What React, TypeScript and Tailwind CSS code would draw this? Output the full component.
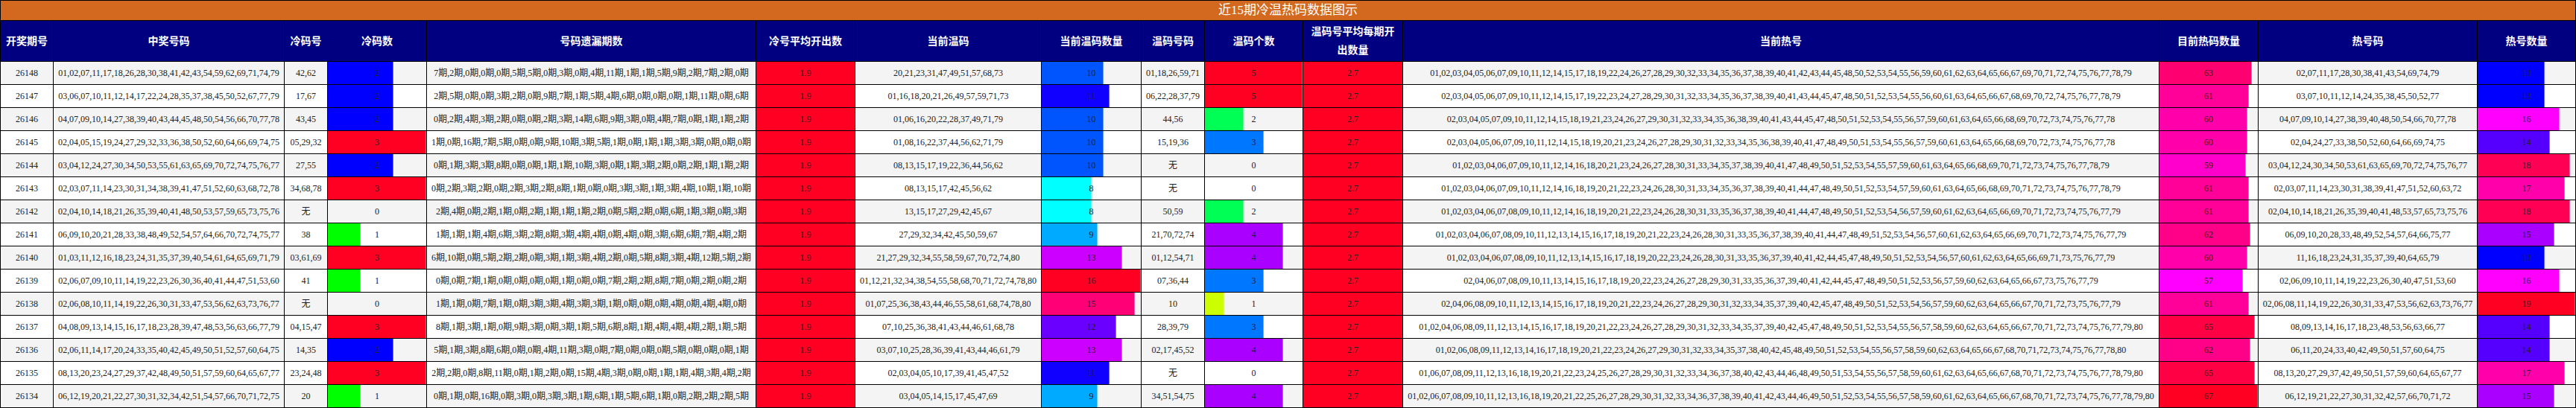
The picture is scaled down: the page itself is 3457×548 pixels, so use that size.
const COLS = [71, 310, 58, 133, 442, 133, 250, 134, 85, 132, 134, 1015, 133, 294, 132];

const HEADERS = ['开奖期号', '中奖号码', '冷码号', '冷码数', '号码遗漏期数', '冷号平均开出数', '当前温码', '当前温码数量', '温码号码', '温码个数', '温码号平均每期开出数量', '当前热号', '目前热码数量', '热号码', '热号数量'];

const RED = '#ff0022';

const COLD_COLOR: Record<number, string> = { 1: '#00ff00', 2: '#0000ff', 3: RED };
const WARM_NOW_COLOR: Record<number, string> = {
  8: '#00ffff', 9: '#00aaff', 10: '#0055ff', 11: '#1000ff', 12: '#6a00ff', 13: '#cc00ff', 15: '#ff0077', 16: RED
};
const WARM_COLOR: Record<number, string> = { 1: '#ccff00', 2: '#00ff55', 3: '#0077ff', 4: '#aa00ff', 5: RED };
const HOT_NOW_COLOR: Record<number, string> = {
  57: '#ff00ff', 59: '#ff00cc', 60: '#ff00aa', 61: '#ff0099', 62: '#ff0088', 63: '#ff0070', 65: '#ff0044', 67: RED
};
const HOT_COLOR: Record<number, string> = {
  13: '#0000ff', 14: '#5500ff', 15: '#aa00ff', 16: '#ff00ff', 17: '#ff00aa', 18: '#ff0055', 19: RED
};

// issue, winners, cold, miss, warm now, warm, hot now, hot
const ROWS: string[][] = [
  ['26148', '01,02,07,11,17,18,26,28,30,38,41,42,43,54,59,62,69,71,74,79', '42,62', '7,2,0,0,0,5,5,0,3,0,4,11,1,1,5,9,2,7,2,0', '20,21,23,31,47,49,51,57,68,73', '01,18,26,59,71', '01,02,03,04,05,06,07,09,10,11,12,14,15,17,18,19,22,24,26,27,28,29,30,32,33,34,35,36,37,38,39,40,41,42,43,44,45,48,50,52,53,54,55,56,59,60,61,62,63,64,65,66,67,69,70,71,72,74,75,76,77,78,79', '02,07,11,17,28,30,38,41,43,54,69,74,79'],
  ['26147', '03,06,07,10,11,12,14,17,22,24,28,35,37,38,45,50,52,67,77,79', '17,67', '2,5,0,0,3,2,0,9,7,1,5,4,6,0,0,0,1,11,0,6', '01,16,18,20,21,26,49,57,59,71,73', '06,22,28,37,79', '02,03,04,05,06,07,09,10,11,12,14,15,17,19,22,23,24,27,28,29,30,31,32,33,34,35,36,37,38,39,40,41,43,44,45,47,48,50,51,52,53,54,55,56,60,61,63,64,65,66,67,68,69,70,72,74,75,76,77,78,79', '03,07,10,11,12,14,24,35,38,45,50,52,77'],
  ['26146', '04,07,09,10,14,27,38,39,40,43,44,45,48,50,54,56,66,70,77,78', '43,45', '0,2,4,3,2,0,0,2,3,14,6,9,3,0,4,7,0,1,1,2', '01,06,16,20,22,28,37,49,71,79', '44,56', '02,03,04,05,07,09,10,11,12,14,15,18,19,21,23,24,26,27,29,30,31,32,33,34,35,36,38,39,40,41,43,44,45,47,48,50,51,52,53,54,55,56,57,59,60,61,63,64,65,66,68,69,70,72,73,74,75,76,77,78', '04,07,09,10,14,27,38,39,40,48,50,54,66,70,77,78'],
  ['26145', '02,04,05,15,19,24,27,29,32,33,36,38,50,52,60,64,66,69,74,75', '05,29,32', '1,0,16,7,5,0,0,9,10,3,5,1,0,1,1,3,3,0,0,0', '01,08,16,22,37,44,56,62,71,79', '15,19,36', '02,03,04,05,06,07,09,10,11,12,14,15,18,19,20,21,23,24,26,27,28,29,30,31,32,33,34,35,36,38,39,40,41,47,48,49,50,51,53,54,55,56,57,59,60,61,63,64,65,66,68,69,70,72,73,74,75,76,77,78', '02,04,24,27,33,38,50,52,60,64,66,69,74,75'],
  ['26144', '03,04,12,24,27,30,34,50,53,55,61,63,65,69,70,72,74,75,76,77', '27,55', '0,1,3,3,8,0,0,1,1,10,3,0,1,3,2,0,2,1,1,2', '08,13,15,17,19,22,36,44,56,62', '无', '01,02,03,04,06,07,09,10,11,12,14,16,18,20,21,23,24,26,27,28,30,31,33,34,35,37,38,39,40,41,47,48,49,50,51,52,53,54,55,57,59,60,61,63,64,65,66,68,69,70,71,72,73,74,75,76,77,78,79', '03,04,12,24,30,34,50,53,61,63,65,69,70,72,74,75,76,77'],
  ['26143', '02,03,07,11,14,23,30,31,34,38,39,41,47,51,52,60,63,68,72,78', '34,68,78', '0,2,3,2,0,2,3,2,8,1,0,0,3,3,1,3,4,10,1,10', '08,13,15,17,42,45,56,62', '无', '01,02,03,04,06,07,09,10,11,12,14,16,18,19,20,21,22,23,24,26,28,30,31,33,34,35,36,37,38,39,40,41,44,47,48,49,50,51,52,53,54,57,59,60,61,63,64,65,66,68,69,70,71,72,73,74,75,76,77,78,79', '02,03,07,11,14,23,30,31,38,39,41,47,51,52,60,63,72'],
  ['26142', '02,04,10,14,18,21,26,35,39,40,41,48,50,53,57,59,65,73,75,76', '无', '2,4,0,2,1,0,2,1,1,1,2,0,5,2,0,6,1,3,0,3', '13,15,17,27,29,42,45,67', '50,59', '01,02,03,04,06,07,08,09,10,11,12,14,16,18,19,20,21,22,23,24,26,28,30,31,33,35,36,37,38,39,40,41,44,47,48,49,50,51,52,53,54,56,57,59,60,61,62,63,64,65,66,69,70,71,72,73,74,75,76,77,79', '02,04,10,14,18,21,26,35,39,40,41,48,53,57,65,73,75,76'],
  ['26141', '06,09,10,20,21,28,33,38,48,49,52,54,57,64,66,70,72,74,75,77', '38', '1,1,1,4,6,3,2,8,3,4,4,0,4,0,3,6,6,7,4,2', '27,29,32,34,42,45,50,59,67', '21,70,72,74', '01,02,03,04,06,07,08,09,10,11,12,13,14,15,16,17,18,19,20,21,22,23,24,26,28,30,31,33,35,36,37,38,39,40,41,44,47,48,49,51,52,53,54,56,57,60,61,62,63,64,65,66,69,70,71,72,73,74,75,76,77,79', '06,09,10,20,28,33,48,49,52,54,57,64,66,75,77'],
  ['26140', '01,03,11,12,16,18,23,24,31,35,37,39,40,54,61,64,65,69,71,79', '03,61,69', '6,10,0,5,2,2,0,3,1,3,4,2,0,5,8,3,4,12,5,2', '21,27,29,32,34,55,58,59,67,70,72,74,80', '01,12,54,71', '01,02,03,04,06,07,08,09,10,11,12,13,14,15,16,17,18,19,20,22,23,24,26,28,30,31,33,35,36,37,39,40,41,42,44,45,47,48,49,50,51,52,53,54,56,57,60,61,62,63,64,65,66,69,71,73,75,76,77,79', '11,16,18,23,24,31,35,37,39,40,64,65,79'],
  ['26139', '02,06,07,09,10,11,14,19,22,23,26,30,36,40,41,44,47,51,53,60', '41', '0,0,7,1,0,0,0,0,1,0,0,7,2,2,8,7,0,2,0,2', '01,12,21,32,34,38,54,55,58,68,70,71,72,74,78,80', '07,36,44', '02,04,06,07,08,09,10,11,13,14,15,16,17,18,19,20,22,23,24,26,27,28,29,30,31,33,35,36,37,39,40,41,42,44,45,47,48,49,50,51,52,53,56,57,59,60,62,63,64,65,66,67,73,75,76,77,79', '02,06,09,10,11,14,19,22,23,26,30,40,47,51,53,60'],
  ['26138', '02,06,08,10,11,14,19,22,26,30,31,33,47,53,56,62,63,73,76,77', '无', '1,1,0,7,1,0,3,3,4,3,3,1,0,0,0,4,0,4,4,0', '01,07,25,36,38,43,44,46,55,58,61,68,74,78,80', '10', '02,04,06,08,09,10,11,12,13,14,15,16,17,18,19,20,21,22,23,24,26,27,28,29,30,31,32,33,34,35,37,39,40,42,45,47,48,49,50,51,52,53,54,56,57,59,60,62,63,64,65,66,67,70,71,72,73,75,76,77,79', '02,06,08,11,14,19,22,26,30,31,33,47,53,56,62,63,73,76,77'],
  ['26137', '04,08,09,13,14,15,16,17,18,23,28,39,47,48,53,56,63,66,77,79', '04,15,47', '8,1,3,1,0,9,3,0,3,1,5,6,8,1,4,4,4,2,1,5', '07,10,25,36,38,41,43,44,46,61,68,78', '28,39,79', '01,02,04,06,08,09,11,12,13,14,15,16,17,18,19,20,21,22,23,24,26,27,28,29,30,31,32,33,34,35,37,39,40,42,45,47,48,49,50,51,52,53,54,55,56,57,58,59,60,62,63,64,65,66,67,70,71,72,73,74,75,76,77,79,80', '08,09,13,14,16,17,18,23,48,53,56,63,66,77'],
  ['26136', '02,06,11,14,17,20,24,33,35,40,42,45,49,50,51,52,57,60,64,75', '14,35', '5,1,3,8,6,0,0,4,11,3,0,7,0,0,0,5,0,0,0,1', '03,07,10,25,28,36,39,41,43,44,46,61,79', '02,17,45,52', '01,02,06,08,09,11,12,13,14,16,17,18,19,20,21,22,23,24,26,27,29,30,31,32,33,34,35,37,38,40,42,45,48,49,50,51,52,53,54,55,56,57,58,59,60,62,63,64,65,66,67,68,70,71,72,73,74,75,76,77,78,80', '06,11,20,24,33,40,42,49,50,51,57,60,64,75'],
  ['26135', '08,13,20,23,24,27,29,37,42,48,49,50,51,57,59,60,64,65,67,77', '23,24,48', '2,2,0,8,11,0,1,2,0,15,4,3,0,0,1,1,4,3,4,2', '02,03,04,05,10,17,39,41,45,47,52', '无', '01,06,07,08,09,11,12,13,16,18,19,20,21,22,23,24,25,26,27,28,29,30,31,32,33,34,36,37,38,40,42,43,44,46,48,49,50,51,53,54,55,56,57,58,59,60,61,62,63,64,65,66,67,68,70,71,72,73,74,75,76,77,78,79,80', '08,13,20,27,29,37,42,49,50,51,57,59,60,64,65,67,77'],
  ['26134', '06,12,19,20,21,22,27,30,31,32,34,42,51,54,57,66,70,71,72,75', '20', '0,1,0,16,0,3,0,3,3,1,6,1,5,6,1,0,2,2,2,5', '03,04,05,14,15,17,45,47,69', '34,51,54,75', '01,02,06,07,08,09,10,11,12,13,16,18,19,20,21,22,25,26,27,28,29,30,31,32,33,34,36,37,38,39,40,41,42,43,44,46,49,50,51,52,53,54,55,56,57,58,59,60,61,62,63,64,65,66,67,68,70,71,72,73,74,75,76,77,78,79,80', '06,12,19,21,22,27,30,31,32,42,57,66,70,71,72'],
];

const countOf = (list: string) => (list === '无' ? 0 : list.split(',').length);

function Bar({ value, max, colors }: { value: number; max: number; colors: Record<number, string> }) {
  return (
    <td className="relative border border-black p-0 text-center">
      {value > 0 && (
        <div
          className="absolute inset-y-0 left-0 border-r border-white/40"
          style={{ width: `${(value / max) * 100}%`, backgroundColor: colors[value] }}
        />
      )}
      <span className="relative">{value}</span>
    </td>
  );
}

function Cell({ text }: { text: string }) {
  return <td className="border border-black p-0 text-center whitespace-nowrap">{text}</td>;
}

function Flat({ text }: { text: string }) {
  return <td className="border border-black bg-[#ff0022] p-0 text-center">{text}</td>;
}

export default function App() {
  return (
    <div className="w-[3456px] bg-white font-['Liberation_Serif','Noto_Sans_CJK_SC',serif] text-xs text-[#222]">
      <table className="w-full table-fixed border-collapse">
        <colgroup>
          {COLS.map((w, i) => (
            <col key={i} style={{ width: w }} />
          ))}
        </colgroup>
        <thead>
          <tr className="h-[27px] bg-[#d2691e]">
            <th colSpan={15} className="border border-black p-0 text-center text-[17px] font-normal text-white">
              近15期冷温热码数据图示
            </th>
          </tr>
          <tr className="h-[55px] bg-[#000080]">
            {HEADERS.map((h, i) => (
              <th
                key={h}
                className={`border border-black py-0 text-center text-sm leading-[25px] font-bold text-white ${i === 10 ? 'px-2' : 'px-0 whitespace-nowrap'} ${i === 2 ? 'border-r-[#000080]' : ''}`}
              >
                {h}
              </th>
            ))}
          </tr>
        </thead>
        <tbody>
          {ROWS.map((r, i) => {
            const cold = countOf(r[2]);
            const warmNow = countOf(r[4]);
            const warm = countOf(r[5]);
            const hotNow = countOf(r[6]);
            const hot = countOf(r[7]);
            const miss = r[3].split(',').map(n => `${n}期`).join(',');
            return (
              <tr key={r[0]} className={`h-[31px] ${i % 2 === 0 ? 'bg-[#f4f4f4]' : 'bg-white'}`}>
                <Cell text={r[0]} />
                <Cell text={r[1]} />
                <Cell text={r[2]} />
                <Bar value={cold} max={3} colors={COLD_COLOR} />
                <Cell text={miss} />
                <Flat text="1.9" />
                <Cell text={r[4]} />
                <Bar value={warmNow} max={16} colors={WARM_NOW_COLOR} />
                <Cell text={r[5]} />
                <Bar value={warm} max={5} colors={WARM_COLOR} />
                <Flat text="2.7" />
                <Cell text={r[6]} />
                <Bar value={hotNow} max={67} colors={HOT_NOW_COLOR} />
                <Cell text={r[7]} />
                <Bar value={hot} max={19} colors={HOT_COLOR} />
              </tr>
            );
          })}
        </tbody>
      </table>
    </div>
  );
}
